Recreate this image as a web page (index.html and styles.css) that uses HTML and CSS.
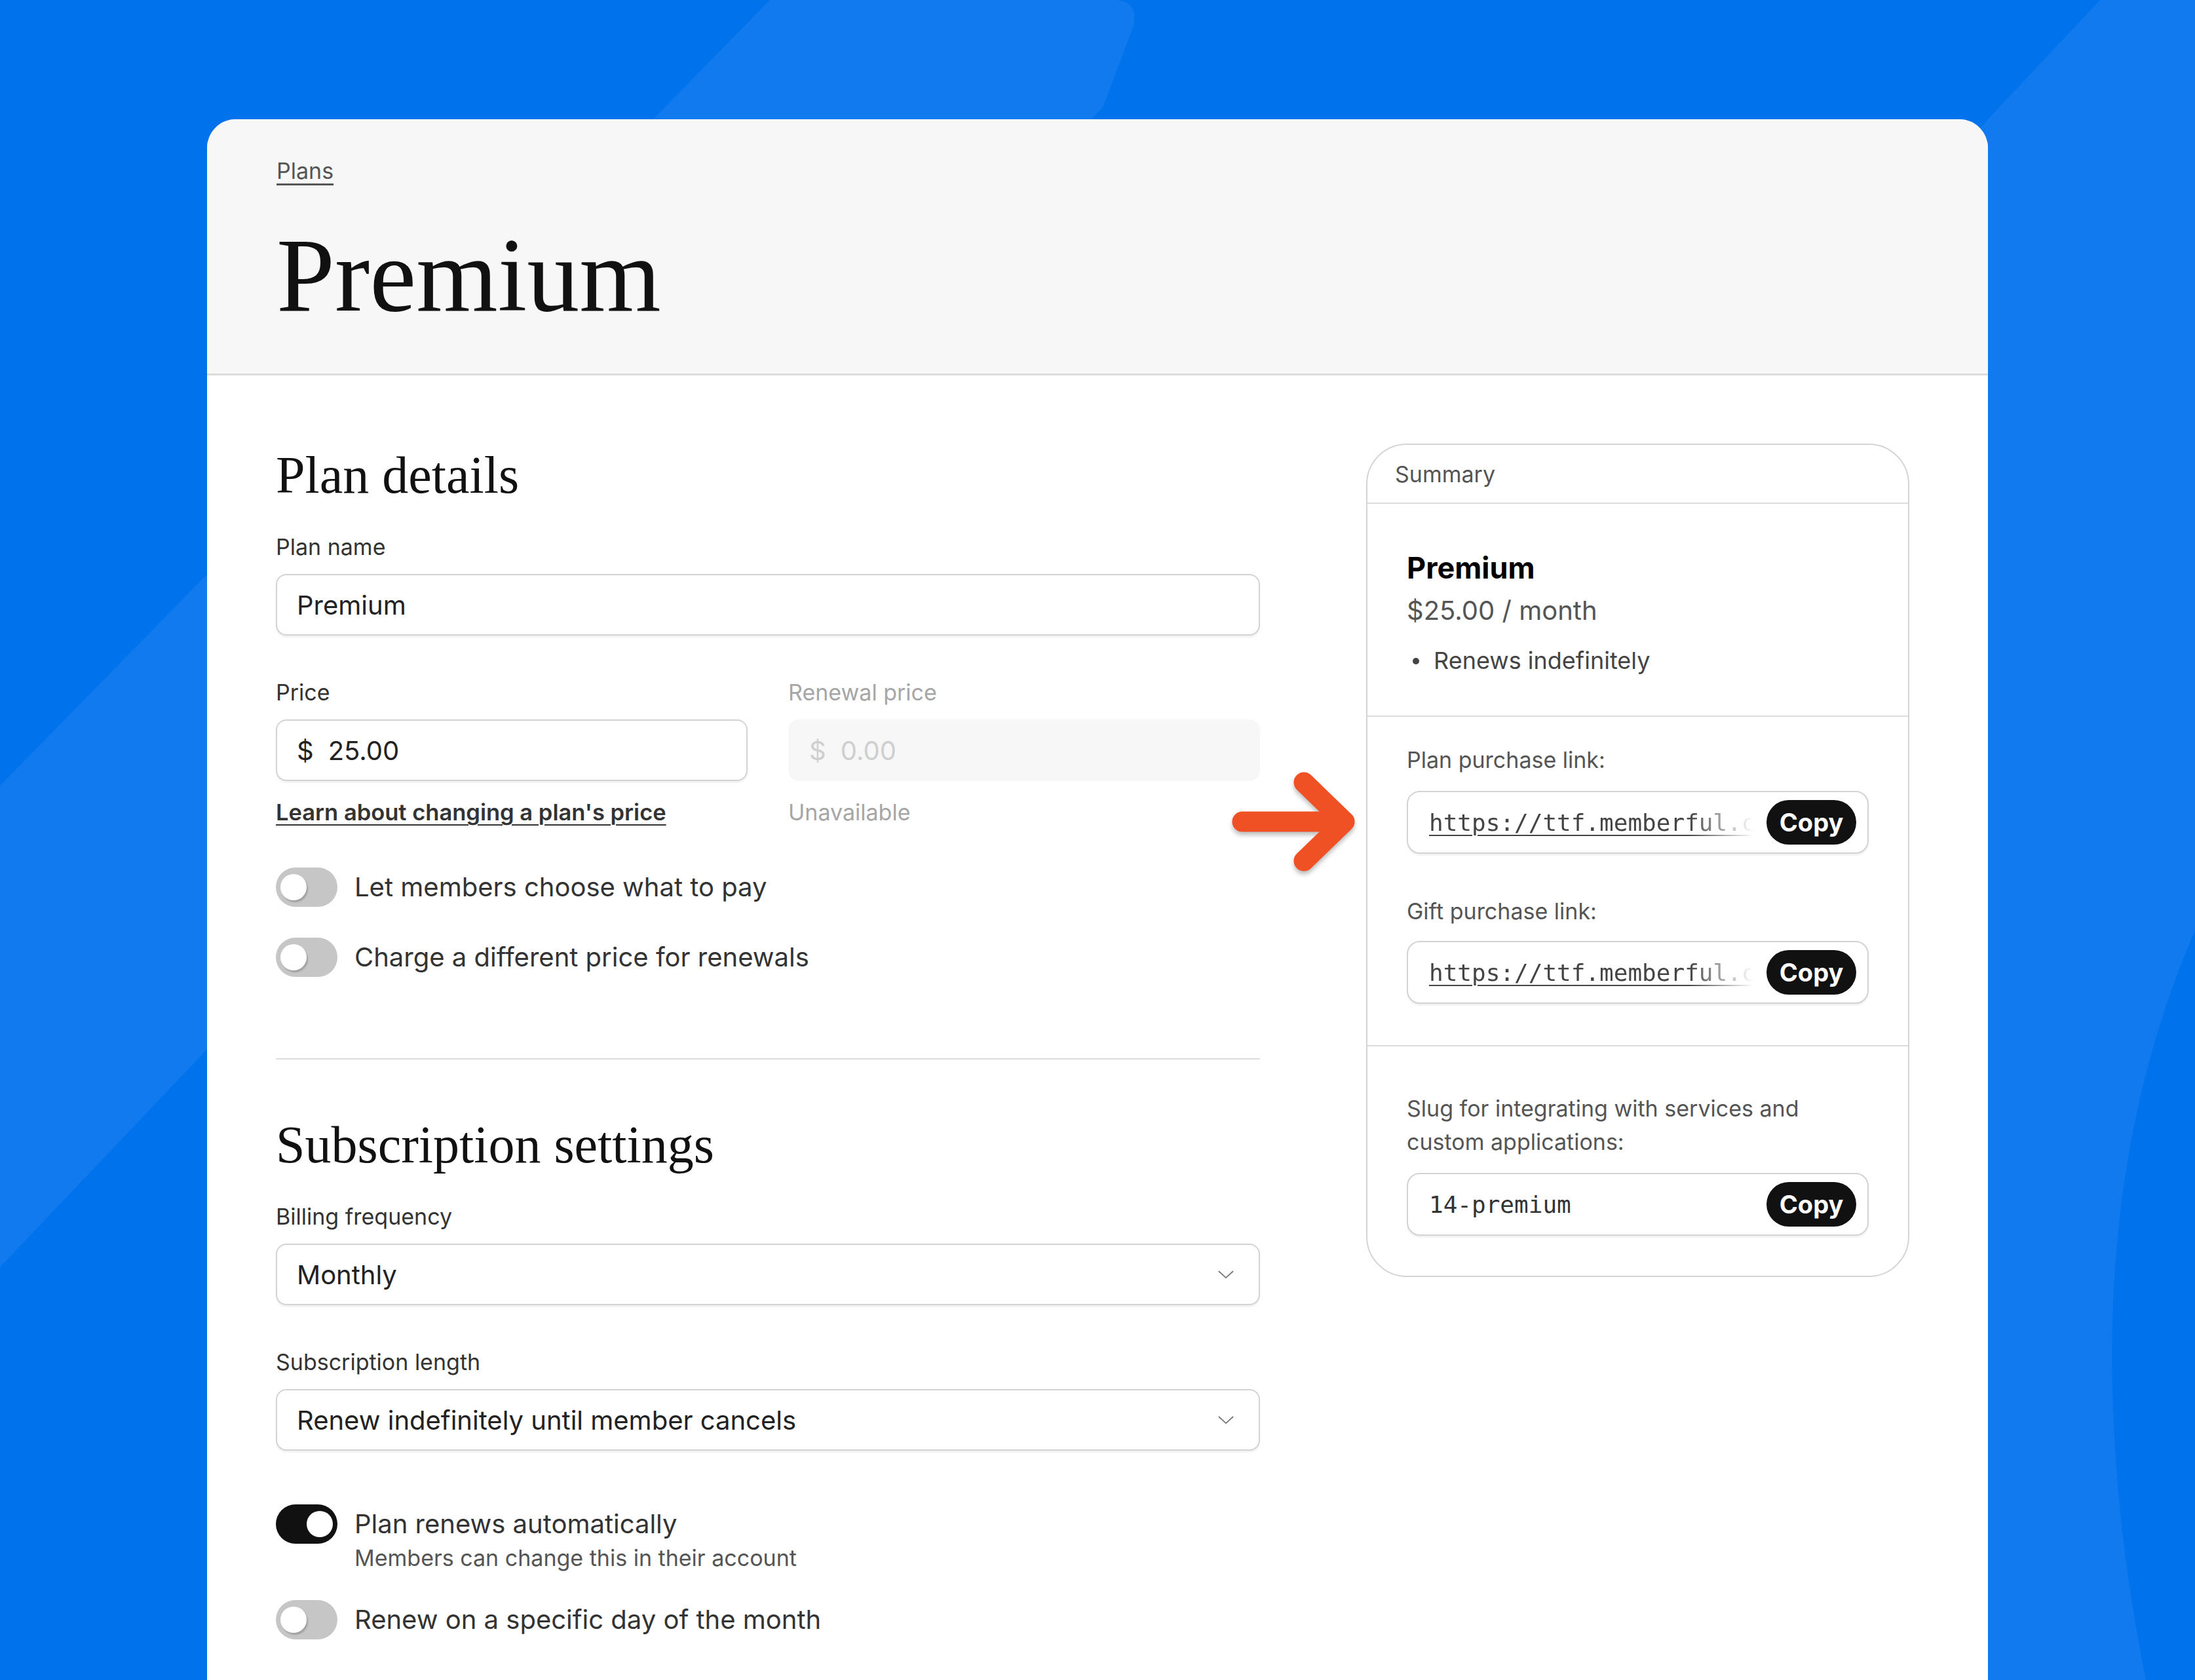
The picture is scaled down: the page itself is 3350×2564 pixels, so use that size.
FILE: index.html
```html
<!DOCTYPE html>
<html lang="en">
<head>
  <meta charset="UTF-8" />
  <title>Premium – Plans</title>
  <link rel="stylesheet" href="styles.css">
</head>
<body>

  <svg class="backdrop" viewBox="0 0 3350 2564" preserveAspectRatio="none">
    <path class="shade" d="M1175,0 L1700,0 Q1738,0 1730,40 L1683,164 L0,1934 L0,1199 Z" />
    <path class="shade" d="M3205,0 L3350,0 L3350,2564 L795,2564 Z" />
    <path class="deep" d="M3350,1420 C3250,1650 3215,1900 3225,2150 C3232,2330 3255,2460 3275,2564 L3350,2564 Z" />
  </svg>

  <main class="sheet">
    <header class="sheet-head">
      <a class="crumb" href="#">Plans</a>
      <h1>Premium</h1>
    </header>

    <div class="sheet-body">
      <section class="form-col">
        <h2>Plan details</h2>

        <div class="field">
          <label>Plan name</label>
          <div class="input">Premium</div>
        </div>

        <div class="price-row">
          <div class="field">
            <label>Price</label>
            <div class="input"><span class="cur">$</span>25.00</div>
            <a class="help" href="#">Learn about changing a plan's price</a>
          </div>
          <div class="field is-disabled">
            <label>Renewal price</label>
            <div class="input"><span class="cur">$</span>0.00</div>
            <span class="help">Unavailable</span>
          </div>
        </div>

        <div class="toggles">
          <div class="toggle-row">
            <span class="switch"></span>
            <span class="toggle-text">Let members choose what to pay</span>
          </div>
          <div class="toggle-row">
            <span class="switch"></span>
            <span class="toggle-text">Charge a different price for renewals</span>
          </div>
        </div>

        <hr class="divider">

        <h2>Subscription settings</h2>

        <div class="field">
          <label>Billing frequency</label>
          <div class="input select">
            Monthly
            <svg class="chev" viewBox="0 0 26 14"><polyline points="1,1 13,12 25,1" /></svg>
          </div>
        </div>

        <div class="field">
          <label>Subscription length</label>
          <div class="input select">
            Renew indefinitely until member cancels
            <svg class="chev" viewBox="0 0 26 14"><polyline points="1,1 13,12 25,1" /></svg>
          </div>
        </div>

        <div class="toggles lower">
          <div class="toggle-row">
            <span class="switch on"></span>
            <span class="toggle-text">
              Plan renews automatically
              <small>Members can change this in their account</small>
            </span>
          </div>
          <div class="toggle-row">
            <span class="switch"></span>
            <span class="toggle-text">Renew on a specific day of the month</span>
          </div>
        </div>
      </section>

      <aside class="summary">
        <div class="summary-head">Summary</div>

        <div class="summary-plan">
          <div class="plan-name">Premium</div>
          <div class="plan-price">$25.00 / month</div>
          <ul class="plan-notes">
            <li>Renews indefinitely</li>
          </ul>
        </div>

        <div class="summary-links">
          <div class="copy-label">Plan purchase link:</div>
          <div class="copy-box">
            <div class="copy-value fade"><a href="#">https://ttf.memberful.c</a></div>
            <button class="copy-btn">Copy</button>
          </div>

          <div class="copy-label gift">Gift purchase link:</div>
          <div class="copy-box">
            <div class="copy-value fade"><a href="#">https://ttf.memberful.c</a></div>
            <button class="copy-btn">Copy</button>
          </div>
        </div>

        <div class="summary-slug">
          <div class="copy-label wide">Slug for integrating with services and custom applications:</div>
          <div class="copy-box">
            <div class="copy-value">14-premium</div>
            <button class="copy-btn">Copy</button>
          </div>
        </div>
      </aside>

      <!-- callout arrow pointing at the purchase link -->
      <svg class="callout" viewBox="0 0 220 160">
        <line x1="20" y1="79" x2="168" y2="79" />
        <polyline points="114,19 176,79 114,139" />
      </svg>
    </div>
  </main>

</body>
</html>
```

FILE: styles.css
```css
html, body {
  margin: 0;
  height: 2564px;
  overflow: hidden;
}

body {
  position: relative;
  background: #0073ec;
  font-family: Inter, "Noto Sans", sans-serif;
  color: #333;
}

.backdrop {
  position: absolute;
  top: 0;
  left: 0;
  width: 3350px;
  height: 2564px;
}

.backdrop .shade {
  fill: #107aee;
}

.backdrop .deep {
  fill: #0073ec;
}

/* main white sheet */
.sheet {
  position: relative;
  z-index: 1;
  width: 2718px;
  min-height: 2420px;
  margin: 182px 0 0 316px;
  background: #fff;
  border-radius: 44px 44px 0 0;
  overflow: hidden;
}

.sheet-head {
  height: 391px;
  box-sizing: border-box;
  padding: 57px 106px 0;
  background: #f7f7f7;
  border-bottom: 3px solid #dcdcdc;
}

.crumb {
  display: inline-block;
  font-size: 34px;
  line-height: 44px;
  color: #555;
  text-decoration: underline;
  text-decoration-thickness: 3px;
  text-underline-offset: 7px;
}

h1 {
  margin: 57px 0 0;
  font-family: "Liberation Serif", "DejaVu Serif", serif;
  font-weight: normal;
  font-size: 160px;
  line-height: 160px;
  color: #111;
}

.sheet-body {
  position: relative;
  display: flex;
  gap: 162px;
  padding: 104px 120px 0 105px;
}

.form-col {
  flex: none;
  width: 1502px;
}

h2 {
  margin: 0 0 40px;
  font-family: "Liberation Serif", "DejaVu Serif", serif;
  font-weight: normal;
  font-size: 80px;
  line-height: 96px;
  color: #111;
}

.field {
  margin-bottom: 65px;
}

.field label {
  display: block;
  margin-bottom: 19px;
  font-size: 34px;
  line-height: 44px;
  color: #333;
}

.input {
  display: flex;
  align-items: center;
  height: 94px;
  box-sizing: border-box;
  padding: 0 30px;
  border: 2px solid #d3d3d3;
  border-radius: 16px;
  box-shadow: 0 3px 2px rgba(0, 0, 0, 0.05);
  font-size: 40px;
  color: #222;
  background: #fff;
}

.input .cur {
  margin-right: 22px;
}

.select {
  justify-content: space-between;
}

.chev {
  width: 24px;
  height: 13px;
  margin-right: 8px;
  fill: none;
  stroke: #777;
  stroke-width: 2;
}

.price-row {
  display: grid;
  grid-template-columns: 1fr 1fr;
  gap: 62px;
}

.price-row .field {
  margin-bottom: 0;
}

.help {
  display: block;
  margin-top: 26px;
  font-size: 34.5px;
  line-height: 44px;
  font-weight: 600;
  color: #333;
  text-decoration: underline;
  text-decoration-thickness: 2px;
  text-underline-offset: 6px;
}

.is-disabled label,
.is-disabled .help {
  color: #a6a6a6;
  font-size: 34px;
  font-weight: normal;
  text-decoration: none;
}

.is-disabled .input {
  border-color: transparent;
  background: #f7f7f7;
  box-shadow: none;
  color: #cfcfcf;
}

/* toggles */
.toggles {
  display: flex;
  flex-direction: column;
  gap: 47px;
  margin-top: 62px;
}

.toggles.lower {
  margin-top: 82px;
  gap: 42px;
}

.toggle-row {
  display: flex;
  align-items: flex-start;
  gap: 26px;
}

.switch {
  position: relative;
  flex: none;
  width: 94px;
  height: 60px;
  border-radius: 30px;
  background: #c6c6c6;
}

.switch::after {
  content: "";
  position: absolute;
  top: 10px;
  left: 7px;
  width: 40px;
  height: 40px;
  border-radius: 50%;
  background: #fff;
  box-shadow: 2px 3px 2px rgba(0, 0, 0, 0.18);
}

.switch.on {
  background: #111;
}

.switch.on::after {
  left: 47px;
  box-shadow: none;
}

.toggle-text {
  font-size: 40px;
  line-height: 60px;
  color: #333;
}

.toggle-text small {
  display: block;
  font-size: 34px;
  line-height: 44px;
  color: #555;
}

.divider {
  margin: 124px 0 82px;
  border: none;
  border-top: 2px solid #dcdcdc;
}

/* summary card */
.summary {
  flex: none;
  align-self: flex-start;
  width: 829px;
  box-sizing: border-box;
  border: 2px solid #d4d4d4;
  border-radius: 62px;
  overflow: hidden;
}

.summary-head {
  display: flex;
  align-items: center;
  height: 88px;
  padding: 0 42px;
  border-bottom: 2px solid #dcdcdc;
  font-size: 34px;
  color: #555;
}

.summary-plan {
  padding: 70px 60px 62px;
  border-bottom: 2px solid #dcdcdc;
}

.plan-name {
  font-size: 45px;
  line-height: 56px;
  font-weight: 700;
  color: #000;
}

.plan-price {
  margin-top: 13px;
  font-size: 40px;
  line-height: 48px;
  color: #555;
}

.plan-notes {
  margin: 30px 0 0;
  padding: 0;
  list-style: none;
}

.plan-notes li {
  position: relative;
  padding-left: 41px;
  font-size: 36px;
  line-height: 44px;
  color: #444;
}

.plan-notes li::before {
  content: "";
  position: absolute;
  left: 9px;
  top: 18px;
  width: 10px;
  height: 10px;
  border-radius: 50%;
  background: #444;
}

.summary-links {
  padding: 44px 60px 63px;
  border-bottom: 2px solid #dcdcdc;
}

.summary-slug {
  padding: 69px 60px 61px;
}

.copy-label {
  font-size: 34px;
  line-height: 44px;
  color: #555;
  margin-bottom: 25px;
}

.copy-label.gift {
  margin-top: 66px;
  margin-bottom: 23px;
}

.copy-label.wide {
  line-height: 51px;
  margin-bottom: 22px;
}

.copy-box {
  display: flex;
  align-items: center;
  gap: 20px;
  height: 96px;
  box-sizing: border-box;
  padding: 0 17px 0 32px;
  border: 2px solid #d3d3d3;
  border-radius: 20px;
  box-shadow: 0 3px 2px rgba(0, 0, 0, 0.05);
}

.copy-value {
  flex: 1;
  min-width: 0;
  white-space: nowrap;
  font-family: "DejaVu Sans Mono", "Liberation Mono", monospace;
  font-size: 36px;
  color: #333;
}

.copy-value a {
  color: #444;
  text-decoration: underline;
  text-decoration-thickness: 2px;
  text-underline-offset: 6px;
}

.copy-value.fade {
  -webkit-mask-image: linear-gradient(to right, #000 80%, transparent 100%);
  mask-image: linear-gradient(to right, #000 80%, transparent 100%);
}

.copy-btn {
  flex: none;
  width: 137px;
  height: 68px;
  border: none;
  border-radius: 34px;
  background: #111;
  color: #fff;
  font-family: Inter, "Noto Sans", sans-serif;
  font-size: 38px;
  font-weight: 700;
  padding: 0;
}

/* arrow overlay */
.callout {
  position: absolute;
  left: 1560px;
  top: 602px;
  width: 220px;
  height: 160px;
  fill: none;
  stroke: #f05124;
  stroke-width: 31;
  stroke-linecap: round;
  stroke-linejoin: round;
  filter: drop-shadow(0 5px 3px rgba(0, 0, 0, 0.25));
}
```
